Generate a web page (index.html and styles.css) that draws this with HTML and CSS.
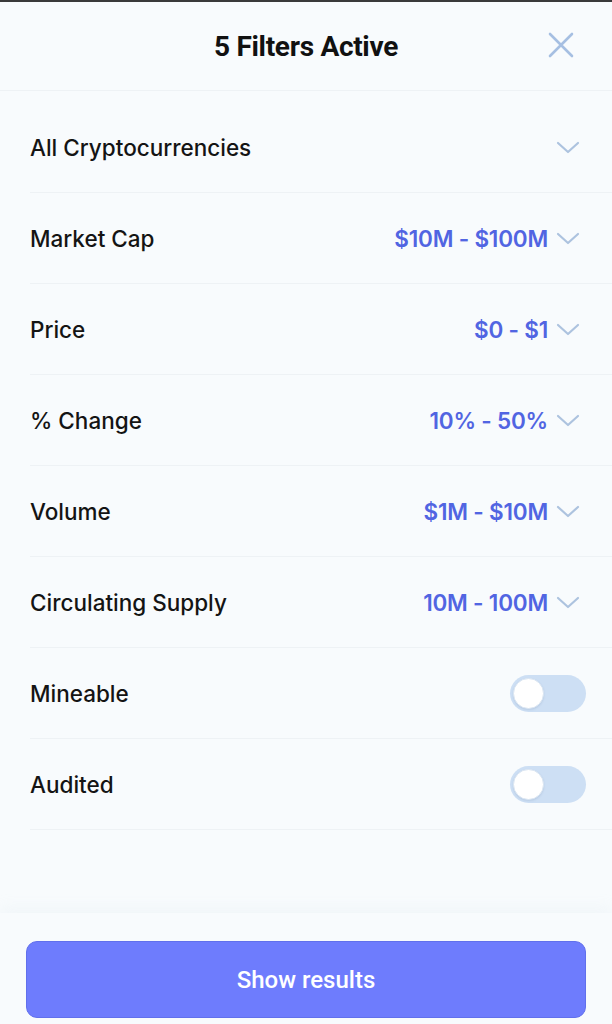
FILE: index.html
```html
<!DOCTYPE html>
<html lang="en">
<head>
    <meta charset="UTF-8">
    <meta name="viewport" content="width=device-width, initial-scale=1.0">
    <title>Filters</title>
    <link rel="stylesheet" href="styles.css">
</head>
<body>
    <div class="sheet">
        <div class="header">
            <h1 class="title">5 Filters Active</h1>
            <button class="closeBtn" type="button" aria-label="Close">
                <svg width="26" height="26" viewBox="0 0 26 26">
                    <path d="M2 2 L24 24 M24 2 L2 24" stroke="#a6bfe2" stroke-width="2.6" stroke-linecap="round" fill="none"/>
                </svg>
            </button>
        </div>

        <div class="filterList">
            <!-- dropdown rows -->
            <div class="row">
                <span class="label">All Cryptocurrencies</span>
                <span class="right">
                    <svg class="chevron" width="24" height="14" viewBox="0 0 24 14"><path d="M2 2 L12 11 L22 2" /></svg>
                </span>
            </div>
            <div class="row">
                <span class="label">Market Cap</span>
                <span class="right">
                    <span class="value">$10M - $100M</span>
                    <svg class="chevron" width="24" height="14" viewBox="0 0 24 14"><path d="M2 2 L12 11 L22 2" /></svg>
                </span>
            </div>
            <div class="row">
                <span class="label">Price</span>
                <span class="right">
                    <span class="value">$0 - $1</span>
                    <svg class="chevron" width="24" height="14" viewBox="0 0 24 14"><path d="M2 2 L12 11 L22 2" /></svg>
                </span>
            </div>
            <div class="row">
                <span class="label">% Change</span>
                <span class="right">
                    <span class="value">10% - 50%</span>
                    <svg class="chevron" width="24" height="14" viewBox="0 0 24 14"><path d="M2 2 L12 11 L22 2" /></svg>
                </span>
            </div>
            <div class="row">
                <span class="label">Volume</span>
                <span class="right">
                    <span class="value">$1M - $10M</span>
                    <svg class="chevron" width="24" height="14" viewBox="0 0 24 14"><path d="M2 2 L12 11 L22 2" /></svg>
                </span>
            </div>
            <div class="row">
                <span class="label">Circulating Supply</span>
                <span class="right">
                    <span class="value">10M - 100M</span>
                    <svg class="chevron" width="24" height="14" viewBox="0 0 24 14"><path d="M2 2 L12 11 L22 2" /></svg>
                </span>
            </div>

            <!-- toggle rows -->
            <div class="row">
                <span class="label">Mineable</span>
                <span class="toggle"><span class="knob"></span></span>
            </div>
            <div class="row">
                <span class="label">Audited</span>
                <span class="toggle"><span class="knob"></span></span>
            </div>
        </div>

        <div class="footer">
            <button class="showBtn" type="button">Show results</button>
        </div>
    </div>
</body>
</html>
```

FILE: styles.css
```css
* {
    box-sizing: border-box;
}
body {
    margin: 0;
    background-color: #f8fbfd;
    font-family: "Inter", "Roboto", sans-serif;
}
.sheet {
    height: 100vh;
    display: flex;
    flex-direction: column;
    border-top: 2px solid #3a3a3a;
    background-color: #f8fbfd;
}
.header {
    position: relative;
    height: 89px;
    flex-shrink: 0;
    display: flex;
    align-items: center;
    justify-content: center;
    border-bottom: 1px solid #eef2f5;
}
.title {
    margin: 0;
    font-family: "Roboto", sans-serif;
    font-size: 28px;
    font-weight: 700;
    color: #111111;
    letter-spacing: -0.3px;
}
.closeBtn {
    position: absolute;
    right: 38px;
    top: 30px;
    width: 26px;
    height: 26px;
    padding: 0;
    border: none;
    background: none;
    display: flex;
}
.filterList {
    flex: 1;
    padding-top: 11px;
}
.row {
    height: 91px;
    margin-left: 30px;
    padding-right: 26px;
    display: flex;
    align-items: center;
    justify-content: space-between;
    border-bottom: 1px solid #eef2f5;
}
.label {
    font-size: 22.5px;
    font-weight: 500;
    color: #141414;
}
.right {
    display: flex;
    align-items: center;
    gap: 8px;
    padding-right: 6px;
}
.value {
    font-size: 22.5px;
    font-weight: 600;
    color: #5165e2;
    letter-spacing: -0.2px;
}
.chevron {
    display: block;
    margin-top: 2px;
}
.chevron path {
    fill: none;
    stroke: #adc3df;
    stroke-width: 2.2;
    stroke-linecap: round;
    stroke-linejoin: round;
}
.toggle {
    width: 76px;
    height: 37px;
    border-radius: 19px;
    background-color: #cddff4;
    padding: 3px;
    display: flex;
    align-items: center;
}
.knob {
    width: 31px;
    height: 31px;
    border-radius: 50%;
    background-color: #ffffff;
    border: 1px solid #dbe6f2;
    box-shadow: 0 1px 2px rgba(80, 110, 150, 0.15);
}
.footer {
    flex-shrink: 0;
    padding: 28px 26px 6px 26px;
    box-shadow: 0 -6px 14px rgba(200, 210, 220, 0.12);
    background-color: #f8fbfd;
}
.showBtn {
    width: 100%;
    height: 77px;
    border-radius: 11px;
    border: 1px solid #6170ec;
    background-color: #6e7cfd;
    color: #ffffff;
    font-family: "Roboto", sans-serif;
    font-size: 24px;
    font-weight: 500;
    cursor: pointer;
}
```
